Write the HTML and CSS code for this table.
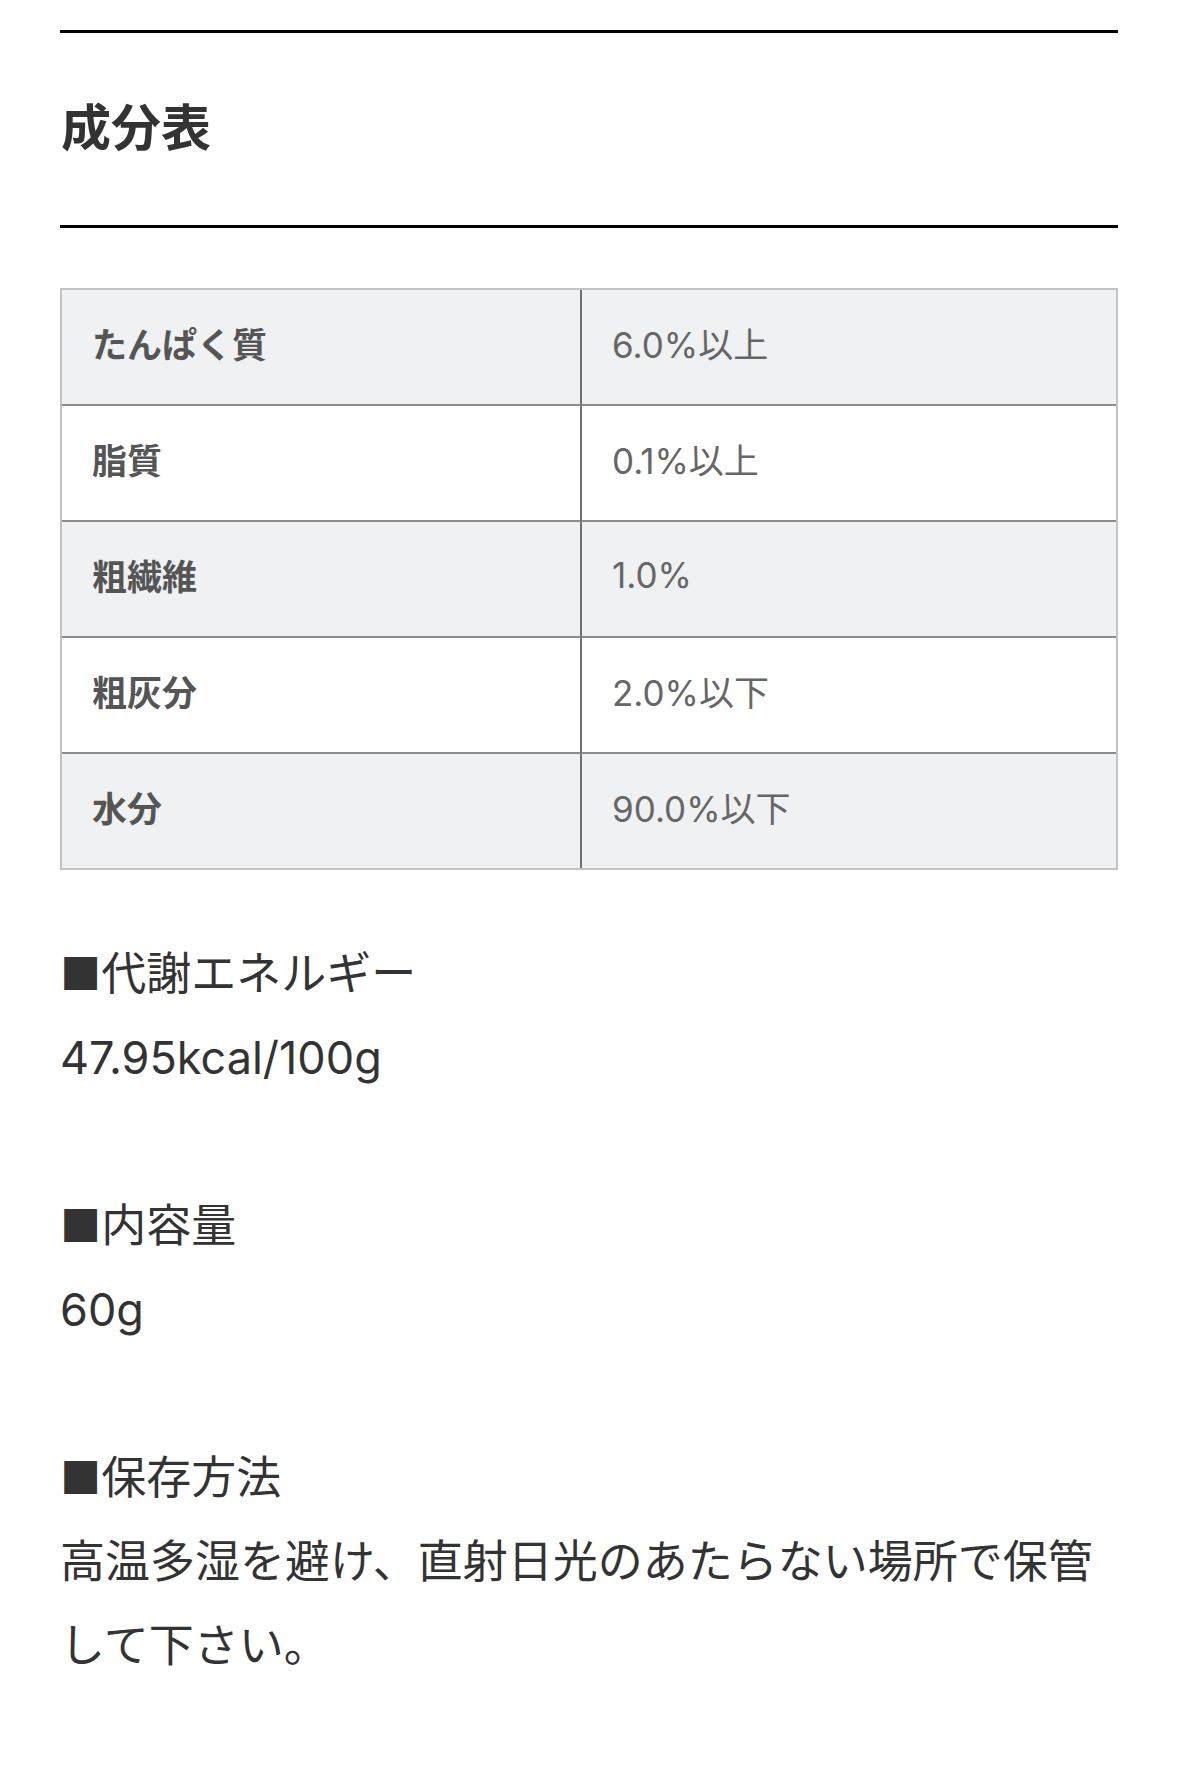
FILE: index.html
```html
<!DOCTYPE html>
<html lang="ja">
<head>
<meta charset="utf-8">
<title>成分表</title>
<link rel="stylesheet" href="styles.css">
</head>
<body>
<div class="page">
  <hr class="rule rule-top">
  <h2 class="title">成分表</h2>
  <hr class="rule">
  <table class="facts">
    <tr class="odd"><th>たんぱく質</th><td>6.0%以上</td></tr>
    <tr><th>脂質</th><td>0.1%以上</td></tr>
    <tr class="odd"><th>粗繊維</th><td>1.0%</td></tr>
    <tr><th>粗灰分</th><td>2.0%以下</td></tr>
    <tr class="odd last"><th>水分</th><td>90.0%以下</td></tr>
  </table>
  <div class="info">
    <p class="block">■代謝エネルギー<br>47.95kcal/100g</p>
    <p class="block">■内容量<br>60g</p>
    <p class="block">■保存方法<br>高温多湿を避け、直射日光のあたらない場所で保管して下さい。</p>
  </div>
</div>
</body>
</html>
```

FILE: styles.css
```css
html, body {
  margin: 0;
  padding: 0;
  background: #ffffff;
}
body {
  font-family: Inter, "Noto Sans CJK JP", "Noto Sans", sans-serif;
  color: #333333;
}
.page {
  padding: 30px 61px 0 60px;
}
.rule {
  border: 0;
  height: 3px;
  background: #000000;
  margin: 0;
}
.title {
  margin: 0;
  height: 192px;
  box-sizing: border-box;
  padding: 0 0 10px 1px;
  display: flex;
  align-items: center;
  font-family: "Noto Sans CJK JP", sans-serif;
  font-size: 50px;
  font-weight: 700;
  color: #333333;
}
.facts {
  width: 100%;
  margin-top: 60px;
  border-collapse: separate;
  border-spacing: 0;
  border: 2px solid #c3c3c5;
  table-layout: fixed;
}
.facts tr.odd th,
.facts tr.odd td {
  background: #f0f1f3;
}
.facts th,
.facts td {
  height: 116px;
  padding: 0 0 9px 30px;
  text-align: left;
  vertical-align: middle;
  font-size: 35px;
  border-bottom: 2px solid #8c8c8c;
  box-sizing: border-box;
}
.facts tr.last th,
.facts tr.last td {
  border-bottom: 0;
  height: 114px;
}
.facts th {
  width: 520px;
  font-family: "Noto Sans CJK JP", sans-serif;
  font-weight: 700;
  color: #555555;
  border-right: 2px solid #707070;
}
.facts td {
  font-weight: 400;
  color: #666666;
}
.info {
  margin-top: 62px;
  display: flex;
  flex-direction: column;
  gap: 84px;
}
.block {
  margin: 0;
  font-size: 45px;
  line-height: 84px;
  color: #333333;
}
```
